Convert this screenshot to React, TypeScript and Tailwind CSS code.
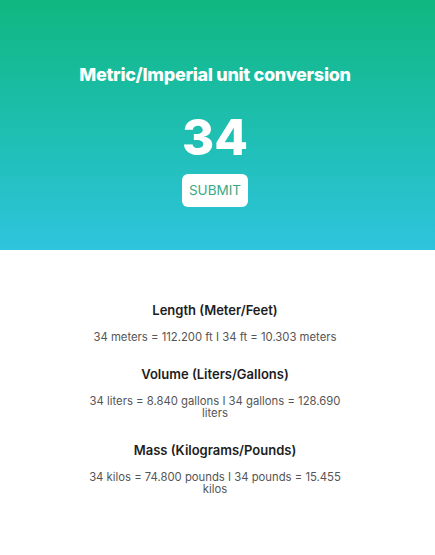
import { useState } from "react";

type Conversion = { title: string; text: string };

function convert(n: number): Conversion[] {
	return [
		{
			title: "Length (Meter/Feet)",
			text: `${n} meters = ${(n * 3.3).toFixed(3)} ft I ${n} ft = ${(n / 3.3).toFixed(3)} meters`
		},
		{
			title: "Volume (Liters/Gallons)",
			text: `${n} liters = ${(n * 0.26).toFixed(3)} gallons I ${n} gallons = ${(n * 3.785).toFixed(3)} liters`
		},
		{
			title: "Mass (Kilograms/Pounds)",
			text: `${n} kilos = ${(n * 2.2).toFixed(3)} pounds I ${n} pounds = ${(n / 2.2).toFixed(3)} kilos`
		}
	];
}

export default function App() {
	const [value] = useState(34);
	const results = convert(value);

	return (
		<div className="min-h-[555px] bg-white pr-[5px] font-['Inter',sans-serif]">
			{/* header with input */}
			<div className="-mr-[5px] flex h-[250px] flex-col items-center bg-gradient-to-b from-[#10b77f] to-[#2ec4dd] pr-[5px] pt-[64px]">
				<h1 className="text-[18px] font-extrabold leading-[22px] tracking-[-0.3px] text-white">Metric/Imperial unit conversion</h1>
				<div className="mt-[25px] text-[49px] font-extrabold leading-[54px] text-white">{value}</div>
				<button className="mt-[9px] h-[33px] w-[66px] rounded-md bg-white text-[13.5px] text-[#3aa985]">SUBMIT</button>
			</div>

			{/* results */}
			<div className="flex flex-col items-center pt-[50px]">
				{results.map((r) => (
					<div key={r.title} className="mb-[20px] flex w-[258px] flex-col items-center text-center">
						<h2 className="text-[13px] font-semibold leading-[20px] text-[#1d1d1d]">{r.title}</h2>
						<p className="mt-[11px] text-[11.3px] leading-[12.5px] text-[#555]">{r.text}</p>
					</div>
				))}
			</div>
		</div>
	);
}
